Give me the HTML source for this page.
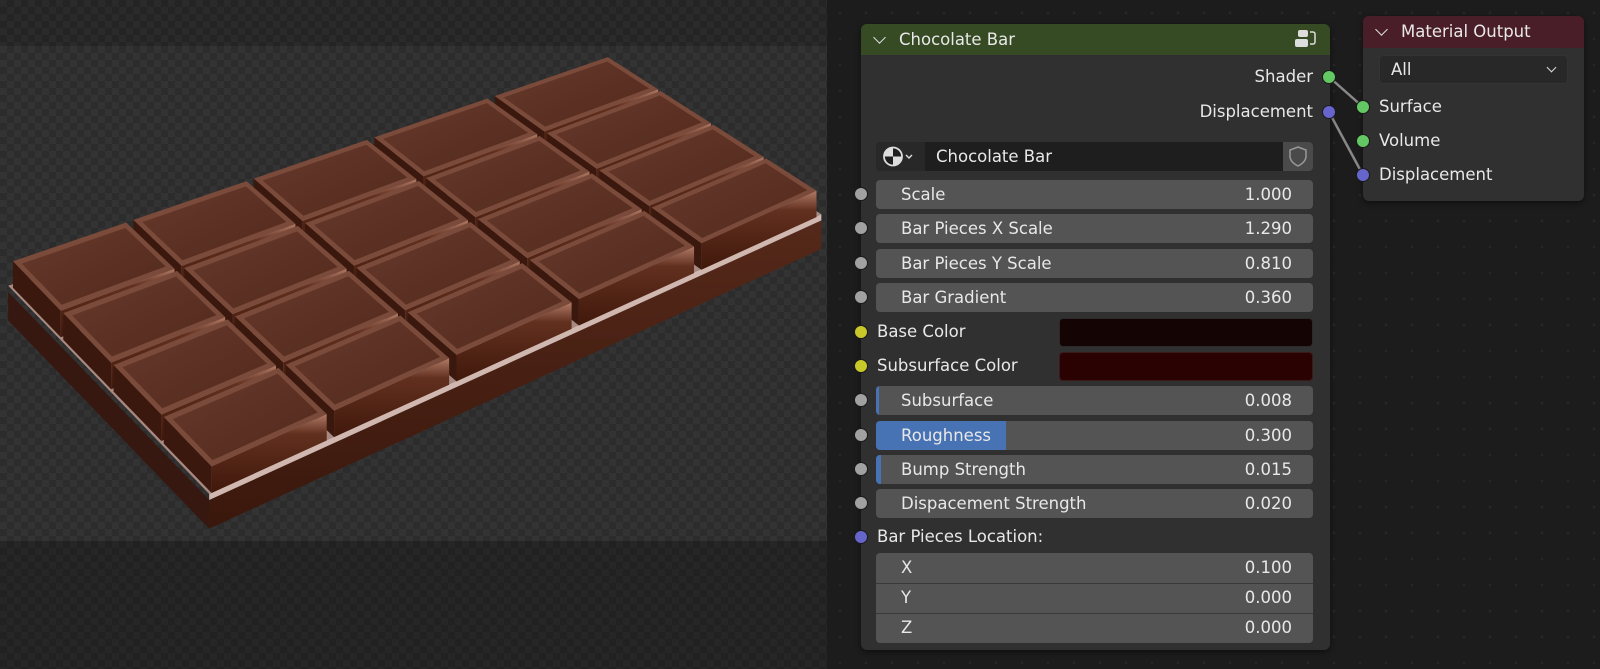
<!DOCTYPE html>
<html><head><meta charset="utf-8"><style>
*{margin:0;padding:0;box-sizing:border-box}
body{width:1600px;height:669px;overflow:hidden;background:#1c1c1c;font-family:"DejaVu Sans","Liberation Sans",sans-serif;color:#e8e8e8;font-size:16.5px;position:relative}
.vp{position:absolute;left:0;top:0;width:827px;height:669px;background:#222}
.band{position:absolute;left:0;width:827px;background:repeating-conic-gradient(#242424 0 25%,#2a2a2a 0 50%) 0 0/14px 14px}
.main{position:absolute;left:0;top:46px;width:827px;height:495px;background:repeating-conic-gradient(#2c2c2c 0 25%,#333 0 50%) 0 0/14px 14px}
.ne{position:absolute;left:827px;top:0;width:773px;height:669px;background-color:#1c1c1c;background-image:radial-gradient(#272727 1.2px,transparent 1.5px);background-size:26px 26px}
.node{position:absolute;background:#303030;border-radius:6px;box-shadow:0 2px 6px rgba(0,0,0,.5)}
.hdr{position:absolute;left:0;top:0;right:0;border-radius:6px 6px 0 0;padding-left:38px;line-height:31px;font-size:16.5px}
.chev{position:absolute;left:14px;top:9px;width:9px;height:9px;border-right:1.6px solid #ddd;border-bottom:1.6px solid #ddd;transform:rotate(45deg)}
.row{position:absolute;left:876px;width:437px;height:29px;background:#545454;border-radius:4px;line-height:29px;overflow:hidden}
.row .l{position:absolute;left:25px}
.row .v{position:absolute;right:21px}
.sock{position:absolute;width:14px;height:14px;border-radius:50%;border:1.5px solid #1a1a1a}
.g{background:#a1a1a1}.y{background:#c8c82a}.b{background:#6565cc}.gr{background:#63c763}
.lab{position:absolute;line-height:20px}
</style></head><body>
<div class="vp">
 <div class="band" style="top:0;height:46px"></div>
 <div class="main"></div>
 <div class="band" style="top:541px;height:128px;background:repeating-conic-gradient(#212121 0 25%,#262626 0 50%) 0 0/14px 14px"></div>
 <svg id="choc" width="827" height="669" viewBox="0 0 810.5 655.6" style="position:absolute;left:0;top:0"></svg>
</div>
<div class="ne"></div>
<svg width="1600" height="669" style="position:absolute;left:0;top:0">
 <line x1="1329" y1="77" x2="1363" y2="107" stroke="#888" stroke-width="2.5"/>
 <line x1="1329" y1="112" x2="1363" y2="175" stroke="#888" stroke-width="2.5"/>
</svg>

<div class="node" style="left:861px;top:24px;width:469px;height:626px">
 <div class="hdr" style="background:#364a24;height:31px"><span class="chev"></span>Chocolate Bar
  <svg width="24" height="22" style="position:absolute;right:12px;top:4px" viewBox="0 0 24 22"><rect x="4" y="2" width="10" height="7" rx="2" fill="#ddd"/><rect x="1" y="11" width="13" height="8" rx="2" fill="#ddd"/><path d="M16 4h3a2 2 0 0 1 2 2v8a2 2 0 0 1-2 2h-3" stroke="#ddd" stroke-width="1.5" fill="none"/></svg>
 </div>
</div>
<div class="lab" style="right:287px;top:67px">Shader</div>
<div class="lab" style="right:287px;top:102px">Displacement</div>
<div class="sock gr" style="left:1322px;top:70px"></div>
<div class="sock b" style="left:1322px;top:105px"></div>

<div style="position:absolute;left:876px;top:142px;width:437px;height:29px;background:#1e1e1e;border-radius:4px;overflow:hidden">
 <div style="position:absolute;left:0;top:0;width:49px;height:29px;background:#282828"></div>
 <svg width="49" height="29" style="position:absolute;left:0;top:0"><circle cx="17" cy="14.5" r="9" fill="#1e1e1e" stroke="#ddd" stroke-width="1.8"/><path d="M17 5.5A9 9 0 0 0 8 14.5H17Z M17 14.5H26A9 9 0 0 1 17 23.5Z" fill="#ddd"/><path d="M30 13l3 3 3-3" stroke="#ddd" stroke-width="1.4" fill="none"/></svg>
 <span style="position:absolute;left:60px;line-height:29px">Chocolate Bar</span>
 <div style="position:absolute;right:0;top:0;width:30px;height:29px;background:#4a4a4a"></div>
 <svg width="30" height="29" style="position:absolute;right:0;top:0"><path d="M15 5l8 3v6c0 5-4 8-8 10c-4-2-8-5-8-10V8z" fill="none" stroke="#999" stroke-width="1.5"/></svg>
</div>

<div class="row" style="top:180px"><span class="l">Scale</span><span class="v">1.000</span></div>
<div class="row" style="top:214px"><span class="l">Bar Pieces X Scale</span><span class="v">1.290</span></div>
<div class="row" style="top:249px"><span class="l">Bar Pieces Y Scale</span><span class="v">0.810</span></div>
<div class="row" style="top:283px"><span class="l">Bar Gradient</span><span class="v">0.360</span></div>
<div class="lab" style="left:877px;top:322px">Base Color</div>
<div style="position:absolute;left:1059px;top:318px;width:254px;height:29px;background:#140504;border-radius:4px;border:1px solid #2a2a2a"></div>
<div class="lab" style="left:877px;top:356px">Subsurface Color</div>
<div style="position:absolute;left:1059px;top:352px;width:254px;height:29px;background:#2a0202;border-radius:4px;border:1px solid #3a1a1a"></div>
<div class="row" style="top:386px"><div style="position:absolute;left:0;top:0;width:3px;height:29px;background:#4772b3"></div><span class="l">Subsurface</span><span class="v">0.008</span></div>
<div class="row" style="top:421px"><div style="position:absolute;left:0;top:0;width:130px;height:29px;background:#4772b3"></div><span class="l">Roughness</span><span class="v">0.300</span></div>
<div class="row" style="top:455px"><div style="position:absolute;left:0;top:0;width:5px;height:29px;background:#4772b3"></div><span class="l">Bump Strength</span><span class="v">0.015</span></div>
<div class="row" style="top:489px"><span class="l">Dispacement Strength</span><span class="v">0.020</span></div>
<div class="lab" style="left:877px;top:527px">Bar Pieces Location:</div>
<div class="row" style="top:553px;height:90px;background:#545454">
 <div style="position:absolute;left:0;top:30px;width:437px;height:1px;background:#3a3a3a"></div>
 <div style="position:absolute;left:0;top:60px;width:437px;height:1px;background:#3a3a3a"></div>
 <span class="l" style="top:0">X</span><span class="v" style="top:0">0.100</span>
 <span class="l" style="top:30px">Y</span><span class="v" style="top:30px">0.000</span>
 <span class="l" style="top:60px">Z</span><span class="v" style="top:60px">0.000</span>
</div>
<div class="sock g" style="left:854px;top:187px"></div>
<div class="sock g" style="left:854px;top:221px"></div>
<div class="sock g" style="left:854px;top:256px"></div>
<div class="sock g" style="left:854px;top:290px"></div>
<div class="sock y" style="left:854px;top:325px"></div>
<div class="sock y" style="left:854px;top:359px"></div>
<div class="sock g" style="left:854px;top:393px"></div>
<div class="sock g" style="left:854px;top:428px"></div>
<div class="sock g" style="left:854px;top:462px"></div>
<div class="sock g" style="left:854px;top:496px"></div>
<div class="sock b" style="left:854px;top:530px"></div>

<div class="node" style="left:1363px;top:16px;width:221px;height:185px">
 <div class="hdr" style="background:#4a1e28;height:32px"><span class="chev"></span>Material Output</div>
 <div style="position:absolute;left:16px;top:39px;width:189px;height:29px;background:#282828;border-radius:4px;border:1px solid #333;line-height:27px;padding-left:11px">All
  <span style="position:absolute;right:12px;top:8px;width:7px;height:7px;border-right:1.5px solid #ddd;border-bottom:1.5px solid #ddd;transform:rotate(45deg)"></span></div>
</div>
<div class="lab" style="left:1379px;top:97px">Surface</div>
<div class="lab" style="left:1379px;top:131px">Volume</div>
<div class="lab" style="left:1379px;top:165px">Displacement</div>
<div class="sock gr" style="left:1356px;top:100px"></div>
<div class="sock gr" style="left:1356px;top:134px"></div>
<div class="sock b" style="left:1356px;top:168px"></div>

<script>
(function(){
var s=document.getElementById('choc'),h='';
var A=[8,256],B=[598,54],C=[805,186],D=[205,460];
function P(u,v,o){o=o||0;return [A[0]+u*(B[0]-A[0])+v*(D[0]-A[0])+u*v*(C[0]-B[0]-D[0]+A[0]),A[1]+u*(B[1]-A[1])+v*(D[1]-A[1])+u*v*(C[1]-B[1]-D[1]+A[1])+o];}
function poly(pts,f){return '<polygon points="'+pts.map(function(p){return p[0].toFixed(1)+','+p[1].toFixed(1)}).join(' ')+'" fill="'+f+'"/>';}
h+='<defs><linearGradient id="tg" x1="0" y1="0" x2="1" y2="1"><stop offset="0" stop-color="#66392b"/><stop offset="1" stop-color="#532a1d"/></linearGradient><linearGradient id="fg" x1="0" y1="0" x2="0" y2="1"><stop offset="0" stop-color="#b07a66"/><stop offset=".25" stop-color="#62301f"/><stop offset="1" stop-color="#40180b"/></linearGradient><linearGradient id="sg" x1="0" y1="0" x2="0" y2="1"><stop offset="0" stop-color="#55291a"/><stop offset="1" stop-color="#3a170c"/></linearGradient></defs>';
var o=26,o1=30,o2=58;
h+=poly([P(0,0,o1),P(0,1,o1),P(0,1,o2),P(0,0,o2)],'#361810');
h+=poly([P(0,1,o1),P(1,1,o1),P(1,1,o2),P(0,1,o2)],'url(#sg)');
h+=poly([P(0,0,o-2),P(1,0,o-2),P(1,1,o-2),P(0,1,o-2)],'#a88a82');
h+=poly([P(0,1,o-2),P(1,1,o-2),P(1,1,o1),P(0,1,o1)],'#d0b8b0');
var pcs=[];
for(var i=0;i<5;i++)for(var j=0;j<4;j++){
 var u0=i/5+.006,u1=(i+1)/5-.006,v0=j/4+.006,v1=(j+1)/4-.006;
 pcs.push([u0,u1,v0,v1,P((u0+u1)/2,(v0+v1)/2)[1]]);
}
pcs.sort(function(a,b){return a[4]-b[4]});
pcs.forEach(function(q){
 var u0=q[0],u1=q[1],v0=q[2],v1=q[3];
 h+=poly([P(u0,v0),P(u0,v1),P(u0,v1,o),P(u0,v0,o)],'#3a180d');
 h+=poly([P(u0,v1),P(u1,v1),P(u1,v1,o),P(u0,v1,o)],'url(#fg)');
 h+=poly([P(u0,v0),P(u1,v0),P(u1,v1),P(u0,v1)],'#7a4a3a');
 var a=P(u0+.008,v0+.02),b=P(u1-.008,v0+.02),c=P(u1-.008,v1-.02),d=P(u0+.008,v1-.02);
 h+=poly([a,b,c,d],'url(#tg)');
});
s.innerHTML=h;
})();
</script>
</body></html>
